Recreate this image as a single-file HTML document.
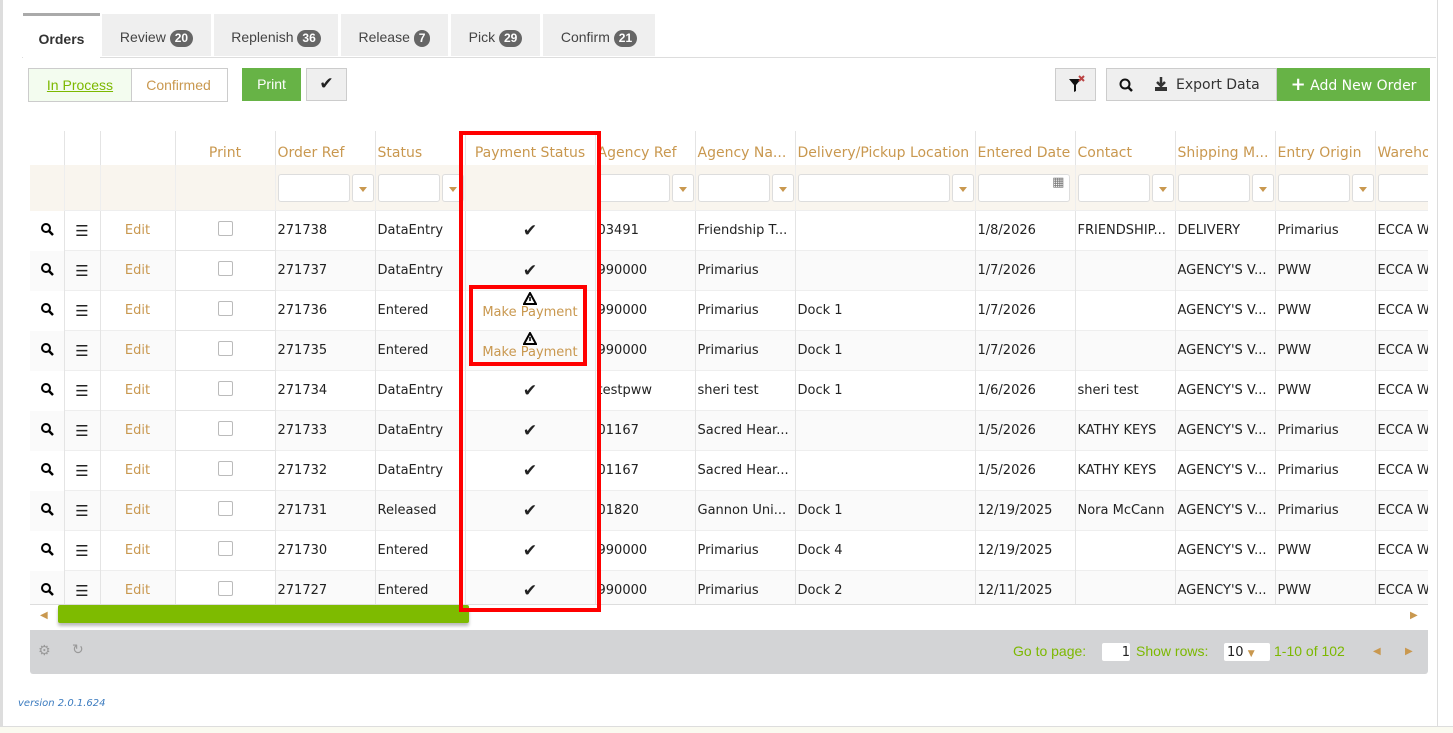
<!DOCTYPE html><html><head><style>
body{margin:0;width:1453px;height:732px;background:#fff;font-family:"DejaVu Sans","Liberation Sans",sans-serif;font-size:13px;color:#222;position:relative;overflow:hidden}
.a{position:absolute}
.tab{position:absolute;top:14px;height:42px;background:#efefef;font-family:"Liberation Sans",sans-serif;font-size:14px;color:#444;line-height:46px;text-align:center}
.b{display:inline-block;background:#666;color:#fff;border-radius:9px;font-size:12px;font-weight:bold;padding:0 5px;line-height:17px}
table{position:absolute;left:30px;top:131px;width:1398px;border-collapse:collapse;table-layout:fixed}
td{padding:0 2px;white-space:nowrap;overflow:hidden;border-left:1px solid #e4e4e4}
tr.h td{height:30px;color:#c9984f;font-size:14px;vertical-align:bottom;padding-bottom:4px}
tr.f td{height:45px;background:#f9f5ee;border-left-color:#eee}
tr.d td{height:39px;border-top:1px solid #eee}
tr.d:nth-child(even) td{background:#fafafa}
.in{display:inline-block;height:26px;border:1px solid #ddd;border-radius:3px;background:#fff;vertical-align:middle}
.dd{display:inline-block;width:20px;height:26px;border:1px solid #ddd;border-radius:3px;background:#fff;vertical-align:middle;margin-left:2px;position:relative}
.dd:after{content:"";position:absolute;left:6px;top:12px;border:4px solid transparent;border-top:5px solid #c9984f}
.c{text-align:center}
.e{color:#c9984f;text-align:center}
.cb{display:inline-block;width:13px;height:13px;border:1px solid #bbb;border-radius:2px;background:#fff}
.pr{background:#fff!important;border:1px solid #e4e4e4}
.mp{color:#c9984f;text-align:center}
.mp div{height:30px;overflow:hidden;font-size:13px;line-height:14px;position:relative;top:-4px}
.mp svg{display:block;margin:0 auto 1px}
.ck{font-size:17px;font-weight:bold}
.hb{font-weight:bold;font-size:15px}
</style></head><body>
<div class="a" style="left:0;top:0;width:3px;height:732px;background:#ddd"></div>
<div class="a" style="left:0;top:726px;width:1453px;height:6px;background:#fafaf0;border-top:1px solid #ddd"></div>
<div class="a" style="left:1437px;top:0;width:1px;height:726px;background:#ddd"></div>
<div class="a" style="left:22px;top:57px;width:1414px;height:1px;background:#ddd"></div>
<div class="tab" style="left:23px;width:77px;background:#fff;border-top:3px solid #aaa;top:13px;height:45px;font-weight:bold;color:#333;line-height:46px">Orders</div>
<div class="tab" style="left:102px;width:109px">Review <span class="b">20</span></div>
<div class="tab" style="left:214px;width:124px">Replenish <span class="b">36</span></div>
<div class="tab" style="left:341px;width:107px">Release <span class="b">7</span></div>
<div class="tab" style="left:451px;width:89px">Pick <span class="b">29</span></div>
<div class="tab" style="left:543px;width:112px">Confirm <span class="b">21</span></div>
<div class="a" style="left:28px;top:68px;width:102px;height:32px;border:1px solid #ccc;background:#f3fcef;color:#7cb800;text-decoration:underline;font-size:14px;line-height:32px;text-align:center;font-family:'Liberation Sans',sans-serif">In Process</div>
<div class="a" style="left:130px;top:68px;width:97px;height:32px;border:1px solid #ccc;border-left:none;color:#c9984f;font-size:14px;line-height:32px;text-align:center;font-family:'Liberation Sans',sans-serif">Confirmed</div>
<div class="a" style="left:242px;top:68px;width:59px;height:33px;background:#67b346;color:#fff;font-size:14px;line-height:33px;text-align:center;font-family:'Liberation Sans',sans-serif">Print</div>
<div class="a" style="left:306px;top:68px;width:39px;height:31px;border:1px solid #ccc;background:#efefef;text-align:center;line-height:31px;font-size:17px;font-weight:bold">✔</div>
<div class="a" style="left:1055px;top:68px;width:39px;height:31px;border:1px solid #ccc;background:#efefef"><svg width="39" height="31"><path d="M13 10h12l-5 6v6l-2 1v-7z" fill="#111"/><path d="M23 7l5 5M28 7l-5 5" stroke="#b44" stroke-width="2"/></svg></div>
<div class="a" style="left:1106px;top:68px;width:39px;height:31px;border:1px solid #ccc;background:#efefef"><svg width="39" height="31"><circle cx="18" cy="15" r="4.5" fill="none" stroke="#111" stroke-width="2"/><path d="M21 18l4 4" stroke="#111" stroke-width="2.5"/></svg></div>
<div class="a" style="left:1146px;top:68px;width:130px;height:31px;border:1px solid #ccc;border-left:none;background:#efefef;font-size:14px;line-height:33px;color:#333"><svg width="30" height="31" style="vertical-align:top"><path d="M15 8v9M11 13l4 4 4-4" stroke="#333" stroke-width="2.5" fill="none"/><rect x="9" y="18" width="12" height="4" fill="#333"/></svg>Export Data</div>
<div class="a" style="left:1277px;top:68px;width:153px;height:33px;background:#67b346;color:#fff;font-size:14px;line-height:33px;text-align:center"><b style="font-size:18px">+</b> Add New Order</div>
<table>
<colgroup><col style="width:34px"><col style="width:36px"><col style="width:75px"><col style="width:100px"><col style="width:100px"><col style="width:90px"><col style="width:130px"><col style="width:100px"><col style="width:100px"><col style="width:180px"><col style="width:100px"><col style="width:100px"><col style="width:100px"><col style="width:100px"><col style="width:53px"></colgroup>
<tr class="h"><td style="border:none"></td><td></td><td></td><td class="c">Print</td><td>Order Ref</td><td>Status</td><td class="c">Payment Status</td><td>Agency Ref</td><td>Agency Na...</td><td>Delivery/Pickup Location</td><td>Entered Date</td><td>Contact</td><td>Shipping M...</td><td>Entry Origin</td><td>Wareho</td></tr>
<tr class="f"><td style="border:none"></td><td></td><td></td><td></td><td><span class="in" style="width:70px"></span><span class="dd"></span></td><td><span class="in" style="width:60px"></span><span class="dd"></span></td><td></td><td><span class="in" style="width:70px"></span><span class="dd"></span></td><td><span class="in" style="width:70px"></span><span class="dd"></span></td><td><span class="in" style="width:150px"></span><span class="dd"></span></td><td><span class="in" style="width:90px;text-align:right;color:#777">▦&nbsp;</span></td><td><span class="in" style="width:70px"></span><span class="dd"></span></td><td><span class="in" style="width:70px"></span><span class="dd"></span></td><td><span class="in" style="width:70px"></span><span class="dd"></span></td><td><span class="in" style="width:60px"></span></td></tr>
<tr class="d"><td class="c" style="border:none"><svg width="14" height="14"><circle cx="6" cy="6" r="4" fill="none" stroke="#000" stroke-width="2"/><path d="M9 9l4 4" stroke="#000" stroke-width="2.5"/></svg></td><td class="c hb">☰</td><td class="e">Edit</td><td class="c pr"><span class="cb"></span></td><td>271738</td><td>DataEntry</td><td class="c ck">✔</td><td>03491</td><td>Friendship T...</td><td></td><td>1/8/2026</td><td>FRIENDSHIP...</td><td>DELIVERY</td><td>Primarius</td><td>ECCA W</td></tr>
<tr class="d"><td class="c" style="border:none"><svg width="14" height="14"><circle cx="6" cy="6" r="4" fill="none" stroke="#000" stroke-width="2"/><path d="M9 9l4 4" stroke="#000" stroke-width="2.5"/></svg></td><td class="c hb">☰</td><td class="e">Edit</td><td class="c pr"><span class="cb"></span></td><td>271737</td><td>DataEntry</td><td class="c ck">✔</td><td>990000</td><td>Primarius</td><td></td><td>1/7/2026</td><td></td><td>AGENCY'S V...</td><td>PWW</td><td>ECCA W</td></tr>
<tr class="d"><td class="c" style="border:none"><svg width="14" height="14"><circle cx="6" cy="6" r="4" fill="none" stroke="#000" stroke-width="2"/><path d="M9 9l4 4" stroke="#000" stroke-width="2.5"/></svg></td><td class="c hb">☰</td><td class="e">Edit</td><td class="c pr"><span class="cb"></span></td><td>271736</td><td>Entered</td><td class="mp"><div><svg width="14" height="13"><path d="M7 1L1 12h12z" fill="none" stroke="#000" stroke-width="2"/><path d="M7 5v4" stroke="#000" stroke-width="1.5"/></svg>Make Payment</div></td><td>990000</td><td>Primarius</td><td>Dock 1</td><td>1/7/2026</td><td></td><td>AGENCY'S V...</td><td>PWW</td><td>ECCA W</td></tr>
<tr class="d"><td class="c" style="border:none"><svg width="14" height="14"><circle cx="6" cy="6" r="4" fill="none" stroke="#000" stroke-width="2"/><path d="M9 9l4 4" stroke="#000" stroke-width="2.5"/></svg></td><td class="c hb">☰</td><td class="e">Edit</td><td class="c pr"><span class="cb"></span></td><td>271735</td><td>Entered</td><td class="mp"><div><svg width="14" height="13"><path d="M7 1L1 12h12z" fill="none" stroke="#000" stroke-width="2"/><path d="M7 5v4" stroke="#000" stroke-width="1.5"/></svg>Make Payment</div></td><td>990000</td><td>Primarius</td><td>Dock 1</td><td>1/7/2026</td><td></td><td>AGENCY'S V...</td><td>PWW</td><td>ECCA W</td></tr>
<tr class="d"><td class="c" style="border:none"><svg width="14" height="14"><circle cx="6" cy="6" r="4" fill="none" stroke="#000" stroke-width="2"/><path d="M9 9l4 4" stroke="#000" stroke-width="2.5"/></svg></td><td class="c hb">☰</td><td class="e">Edit</td><td class="c pr"><span class="cb"></span></td><td>271734</td><td>DataEntry</td><td class="c ck">✔</td><td>testpww</td><td>sheri test</td><td>Dock 1</td><td>1/6/2026</td><td>sheri test</td><td>AGENCY'S V...</td><td>PWW</td><td>ECCA W</td></tr>
<tr class="d"><td class="c" style="border:none"><svg width="14" height="14"><circle cx="6" cy="6" r="4" fill="none" stroke="#000" stroke-width="2"/><path d="M9 9l4 4" stroke="#000" stroke-width="2.5"/></svg></td><td class="c hb">☰</td><td class="e">Edit</td><td class="c pr"><span class="cb"></span></td><td>271733</td><td>DataEntry</td><td class="c ck">✔</td><td>01167</td><td>Sacred Hear...</td><td></td><td>1/5/2026</td><td>KATHY KEYS</td><td>AGENCY'S V...</td><td>Primarius</td><td>ECCA W</td></tr>
<tr class="d"><td class="c" style="border:none"><svg width="14" height="14"><circle cx="6" cy="6" r="4" fill="none" stroke="#000" stroke-width="2"/><path d="M9 9l4 4" stroke="#000" stroke-width="2.5"/></svg></td><td class="c hb">☰</td><td class="e">Edit</td><td class="c pr"><span class="cb"></span></td><td>271732</td><td>DataEntry</td><td class="c ck">✔</td><td>01167</td><td>Sacred Hear...</td><td></td><td>1/5/2026</td><td>KATHY KEYS</td><td>AGENCY'S V...</td><td>Primarius</td><td>ECCA W</td></tr>
<tr class="d"><td class="c" style="border:none"><svg width="14" height="14"><circle cx="6" cy="6" r="4" fill="none" stroke="#000" stroke-width="2"/><path d="M9 9l4 4" stroke="#000" stroke-width="2.5"/></svg></td><td class="c hb">☰</td><td class="e">Edit</td><td class="c pr"><span class="cb"></span></td><td>271731</td><td>Released</td><td class="c ck">✔</td><td>01820</td><td>Gannon Uni...</td><td>Dock 1</td><td>12/19/2025</td><td>Nora McCann</td><td>AGENCY'S V...</td><td>Primarius</td><td>ECCA W</td></tr>
<tr class="d"><td class="c" style="border:none"><svg width="14" height="14"><circle cx="6" cy="6" r="4" fill="none" stroke="#000" stroke-width="2"/><path d="M9 9l4 4" stroke="#000" stroke-width="2.5"/></svg></td><td class="c hb">☰</td><td class="e">Edit</td><td class="c pr"><span class="cb"></span></td><td>271730</td><td>Entered</td><td class="c ck">✔</td><td>990000</td><td>Primarius</td><td>Dock 4</td><td>12/19/2025</td><td></td><td>AGENCY'S V...</td><td>PWW</td><td>ECCA W</td></tr>
<tr class="d"><td class="c" style="border:none"><svg width="14" height="14"><circle cx="6" cy="6" r="4" fill="none" stroke="#000" stroke-width="2"/><path d="M9 9l4 4" stroke="#000" stroke-width="2.5"/></svg></td><td class="c hb">☰</td><td class="e">Edit</td><td class="c pr"><span class="cb"></span></td><td>271727</td><td>Entered</td><td class="c ck">✔</td><td>990000</td><td>Primarius</td><td>Dock 2</td><td>12/11/2025</td><td></td><td>AGENCY'S V...</td><td>PWW</td><td>ECCA W</td></tr>
</table>
<div class="a" style="left:30px;top:604px;width:1398px;height:25px;border-top:1px solid #ddd;background:#fff"></div>
<div class="a" style="left:40px;top:610px;color:#c9984f;font-size:10px">◀</div>
<div class="a" style="left:1410px;top:610px;color:#c9984f;font-size:10px">▶</div>
<div class="a" style="left:58px;top:605px;width:411px;height:18px;background:#7ebb00;border-radius:2px;box-shadow:0 3px 3px #bbb"></div>
<div class="a" style="left:30px;top:630px;width:1398px;height:44px;background:#d3d4d6;border-radius:0 0 3px 3px"></div>
<div class="a" style="left:38px;top:643px;color:#999;font-size:14px">⚙</div>
<div class="a" style="left:72px;top:642px;color:#999;font-size:14px">↻</div>
<div class="a" style="left:1013px;top:643px;color:#7cb800;font-size:14px;font-family:'Liberation Sans',sans-serif">Go to page:</div>
<div class="a" style="left:1102px;top:643px;width:28px;height:18px;background:#fff;border-radius:2px;text-align:right;font-size:13px;line-height:20px">1</div>
<div class="a" style="left:1136px;top:643px;color:#7cb800;font-size:14px;font-family:'Liberation Sans',sans-serif">Show rows:</div>
<div class="a" style="left:1224px;top:643px;width:43px;height:18px;background:#fff;border-radius:2px;font-size:13px;line-height:20px;padding-left:3px">10 <span style="color:#c9984f;font-size:9px">▼</span></div>
<div class="a" style="left:1274px;top:643px;color:#7cb800;font-size:14px;font-family:'Liberation Sans',sans-serif">1-10 of 102</div>
<div class="a" style="left:1373px;top:646px;color:#c9984f;font-size:10px">◀</div>
<div class="a" style="left:1405px;top:646px;color:#c9984f;font-size:10px">▶</div>
<div class="a" style="left:18px;top:698px;color:#3b7bbf;font-size:10px;font-style:italic">version 2.0.1.624</div>
<div class="a" style="left:459px;top:131px;width:134px;height:473px;border:4px solid #f00"></div>
<div class="a" style="left:469px;top:285px;width:110px;height:73px;border:4px solid #f00"></div>
</body></html>
